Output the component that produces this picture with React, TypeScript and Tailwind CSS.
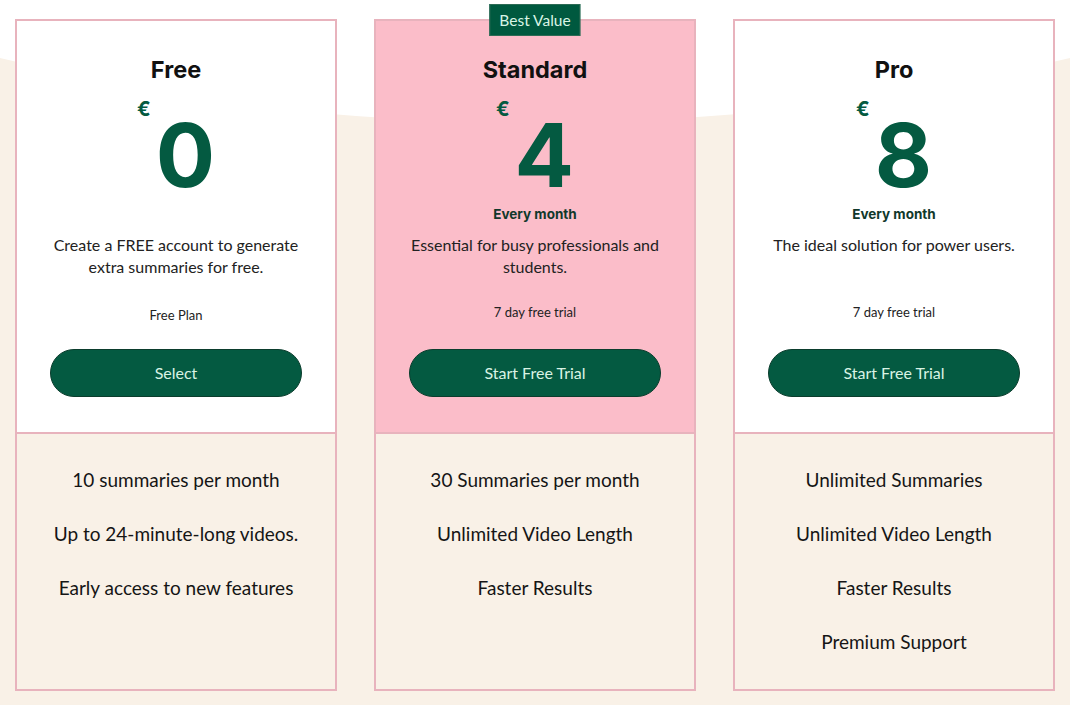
import React from "react";

type Plan = {
  name: string;
  price: string;
  period: boolean;
  desc: string;
  note: string;
  cta: string;
  features: string[];
  featured?: boolean;
};

const plans: Plan[] = [
  {
    name: "Free",
    price: "0",
    period: false,
    desc: "Create a FREE account to generate extra summaries for free.",
    note: "Free Plan",
    cta: "Select",
    features: ["10 summaries per month", "Up to 24-minute-long videos.", "Early access to new features"],
  },
  {
    name: "Standard",
    price: "4",
    period: true,
    desc: "Essential for busy professionals and students.",
    note: "7 day free trial",
    cta: "Start Free Trial",
    features: ["30 Summaries per month", "Unlimited Video Length", "Faster Results"],
    featured: true,
  },
  {
    name: "Pro",
    price: "8",
    period: true,
    desc: "The ideal solution for power users.",
    note: "7 day free trial",
    cta: "Start Free Trial",
    features: ["Unlimited Summaries", "Unlimited Video Length", "Faster Results", "Premium Support"],
  },
];

const head = "font-['Inter',sans-serif]";
const body = "font-['Lato',sans-serif]";

function PlanCard({ plan }: { plan: Plan }) {
  return (
    <div className="relative flex h-[672px] w-[322px] flex-col border-2 border-[#e8b3bd]">
      {plan.featured && (
        <div
          className={`absolute left-1/2 top-[-17px] -translate-x-1/2 border border-[#2d6b55] bg-[#00593f] px-[9px] py-[3px] text-[15.5px] leading-[24px] text-[#d9f5e6] ${body}`}
        >
          Best Value
        </div>
      )}
      <div
        className={`flex h-[413px] shrink-0 flex-col items-center border-b-2 border-[#e8b3bd] px-[26px] pt-[35px] ${
          plan.featured ? "bg-[#fbbdc9]" : "bg-white"
        }`}
      >
        <h2 className={`text-[23.5px] font-bold leading-[28px] text-[#111] ${head}`}>{plan.name}</h2>
        <div className={`mt-[15px] flex items-start gap-[5px] text-[#045a41] ${head}`}>
          <span className="text-[20px] font-bold leading-[20px]">€</span>
          <span className="mt-[20px] text-[88px] font-bold leading-[72px]">{plan.price}</span>
        </div>
        <div
          className={`mt-[13px] text-[13.5px] font-bold leading-[20px] text-[#10382b] ${head} ${
            plan.period ? "" : "invisible"
          }`}
        >
          Every month
        </div>
        <p className={`mt-[10px] h-[44px] max-w-[262px] text-center text-[16px] leading-[22px] text-[#222] ${body}`}>
          {plan.desc}
        </p>
        <div
          className={`text-[13px] leading-[18px] text-[#222] ${body} ${
            plan.period ? "mt-[25px]" : "mt-[28px]"
          }`}
        >
          {plan.note}
        </div>
        <button
          className={`h-[48px] w-[252px] shrink-0 rounded-full border border-[#0b3d2d] bg-[#045a41] text-[16px] text-[#d9f3e4] ${body} ${
            plan.period ? "mt-[28px]" : "mt-[25px]"
          }`}
        >
          {plan.cta}
        </button>
      </div>
      <ul
        className={`flex flex-1 flex-col items-center gap-[30px] bg-[#f9f1e7] pt-[34px] text-[19px] leading-[24px] text-[#151515] ${body}`}
      >
        {plan.features.map((f) => (
          <li key={f}>{f}</li>
        ))}
      </ul>
    </div>
  );
}

export default function App() {
  return (
    <div className="relative h-[705px] w-[1070px] overflow-hidden bg-white">
      <svg className="absolute inset-0" width="1070" height="705" viewBox="0 0 1070 705">
        <path d="M0 58 C 180 100 320 122 535 122 C 750 122 890 100 1070 58 L1070 705 L0 705 Z" fill="#f9f1e7" />
      </svg>
      <div className="relative flex gap-[37px] px-[15px] pt-[19px]">
        {plans.map((p) => (
          <PlanCard key={p.name} plan={p} />
        ))}
      </div>
    </div>
  );
}
